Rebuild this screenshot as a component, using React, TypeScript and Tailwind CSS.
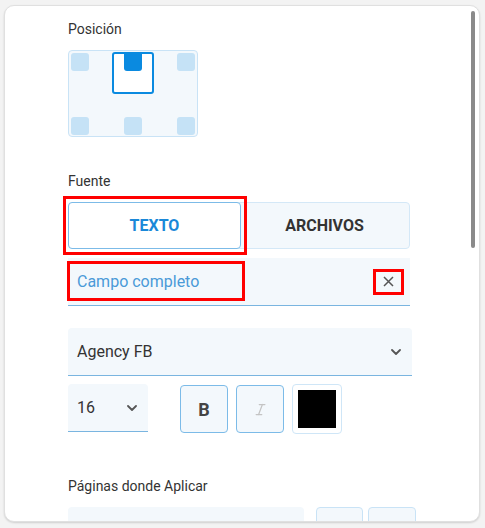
import { Italic } from "lucide-react";



function Chevron() {
	return (
		<svg width="10" height="6" viewBox="0 0 10 6" fill="none">
			<path d="M1 1l4 4 4-4" stroke="#555" strokeWidth="1.8" strokeLinecap="round" strokeLinejoin="round" />
		</svg>
	)
}



function PositionPicker() {

	const cell = "absolute w-[18px] h-[18px] rounded-[3px] bg-[#c5e2f6]"

	return (
		<div className="relative w-[130px] h-[87px] rounded-[4px] border border-[#c9e3f6] bg-[#f3f8fc]">
			<div className={cell + " left-[2px] top-[2px]"} />
			<div className={cell + " right-[2px] top-[2px]"} />
			<div className={cell + " left-[2px] bottom-[1px]"} />
			<div className={cell + " left-[55px] bottom-[1px]"} />
			<div className={cell + " right-[2px] bottom-[1px]"} />

			{/* seleccionado */}
			<div className="absolute left-[43px] top-[1px] w-[42px] h-[42px] rounded-[3px] border-2 border-[#0a8ae0] bg-white">
				<div className="absolute left-[10px] -top-[2px] w-[18px] h-[19px] rounded-b-[3px] bg-[#0a8ae0]" />
			</div>
		</div>
	)
}



export default function App() {

	return (
		<div className="min-h-screen bg-[#f3f3f3] pt-[5px] pl-[4px] font-['Roboto',sans-serif]">

			<div className="relative w-[476px] h-[517px] overflow-hidden rounded-[10px] border border-[#e0e0e0] bg-white shadow-[0_1px_2px_rgba(0,0,0,0.15)]">

				{/* scrollbar */}
				<div className="absolute right-[4px] top-[5px] w-[4px] h-[237px] rounded-full bg-[#8a8a8a]" />

				<div className="pl-[63px] pt-[13px] w-[420px]">

					<div className="h-[20px] leading-[20px] text-[14px] text-[#333]">Posición</div>

					<div className="mt-[11px]">
						<PositionPicker />
					</div>

					<div className="mt-[34px] h-[20px] leading-[20px] text-[14px] text-[#333]">Fuente</div>

					{/* tabs */}
					<div className="relative mt-[11px] flex h-[47px] w-[342px] rounded-[4px] border border-[#d4e8f7] bg-[#f3f8fc]">
						<button className="-m-px w-[173px] h-[47px] rounded-[4px] border border-[#7cbbe8] bg-white text-[16px] font-bold text-[#1a88d8]">
							TEXTO
						</button>
						<button className="flex-1 text-[16px] font-bold text-[#333]">ARCHIVOS</button>
						<div className="pointer-events-none absolute left-[-6px] top-[-7px] w-[184px] h-[59px] border-[3px] border-[#ff0000]" />
					</div>

					{/* campo */}
					<div className="relative mt-[9px] flex h-[48px] w-[342px] items-center justify-between border-b border-[#7ab5e0] bg-[#f3f8fc] pl-[9px] pr-[6px]">
						<span className="text-[16px] text-[#4a9ad8]">Campo completo</span>
						<div className="pointer-events-none absolute left-[-1px] top-[3px] w-[178px] h-[40px] border-[3px] border-[#ff0000]" />
						<button className="flex w-[31px] h-[26px] items-center justify-center border-[3px] border-[#ff0000]">
							<svg width="11" height="11" viewBox="0 0 11 11">
								<path d="M1 1l9 9M10 1l-9 9" stroke="#555" strokeWidth="1.5" />
							</svg>
						</button>
					</div>

					{/* fuente */}
					<div className="mt-[22px] flex h-[48px] w-[344px] items-center justify-between rounded-t-[4px] border-b border-[#7ab5e0] bg-[#f3f8fc] pl-[9px] pr-[11px]">
						<span className="text-[16px] text-[#333]">Agency FB</span>
						<Chevron />
					</div>

					<div className="mt-[8px] flex items-start">
						<div className="flex h-[48px] w-[80px] shrink-0 items-center justify-between rounded-t-[4px] border-b border-[#7ab5e0] bg-[#f3f8fc] pl-[9px] pr-[11px]">
							<span className="text-[16px] text-[#333]">16</span>
							<Chevron />
						</div>

						<button className="ml-[32px] mt-px flex w-[48px] h-[48px] shrink-0 items-center justify-center rounded-[4px] border border-[#7cbbe8] bg-[#f3f8fc] text-[18px] font-bold text-[#444]">
							B
						</button>
						<button className="ml-[8px] mt-px flex w-[48px] h-[48px] shrink-0 items-center justify-center rounded-[4px] border border-[#7cbbe8] bg-[#f3f8fc] text-[#c4c4c4]">
							<Italic size={15} strokeWidth={2} />
						</button>
						<div className="ml-[8px] flex w-[50px] h-[50px] shrink-0 items-center justify-center rounded-[4px] border border-[#cfe6f7] bg-white">
							<div className="w-[38px] h-[38px] bg-black" />
						</div>
					</div>

					<div className="mt-[42px] h-[20px] leading-[20px] text-[14px] text-[#333]">Páginas donde Aplicar</div>

					<div className="mt-[11px] flex">
						<div className="w-[236px] h-[40px] shrink-0 rounded-t-[4px] bg-[#f3f8fc]" />
						<div className="ml-[12px] w-[47px] h-[40px] shrink-0 rounded-t-[4px] border border-[#c9e3f6] bg-[#f3f8fc]" />
						<div className="ml-[5px] w-[48px] h-[40px] shrink-0 rounded-t-[4px] border border-[#c9e3f6] bg-[#f3f8fc]" />
					</div>

				</div>
			</div>
		</div>
	)
}
